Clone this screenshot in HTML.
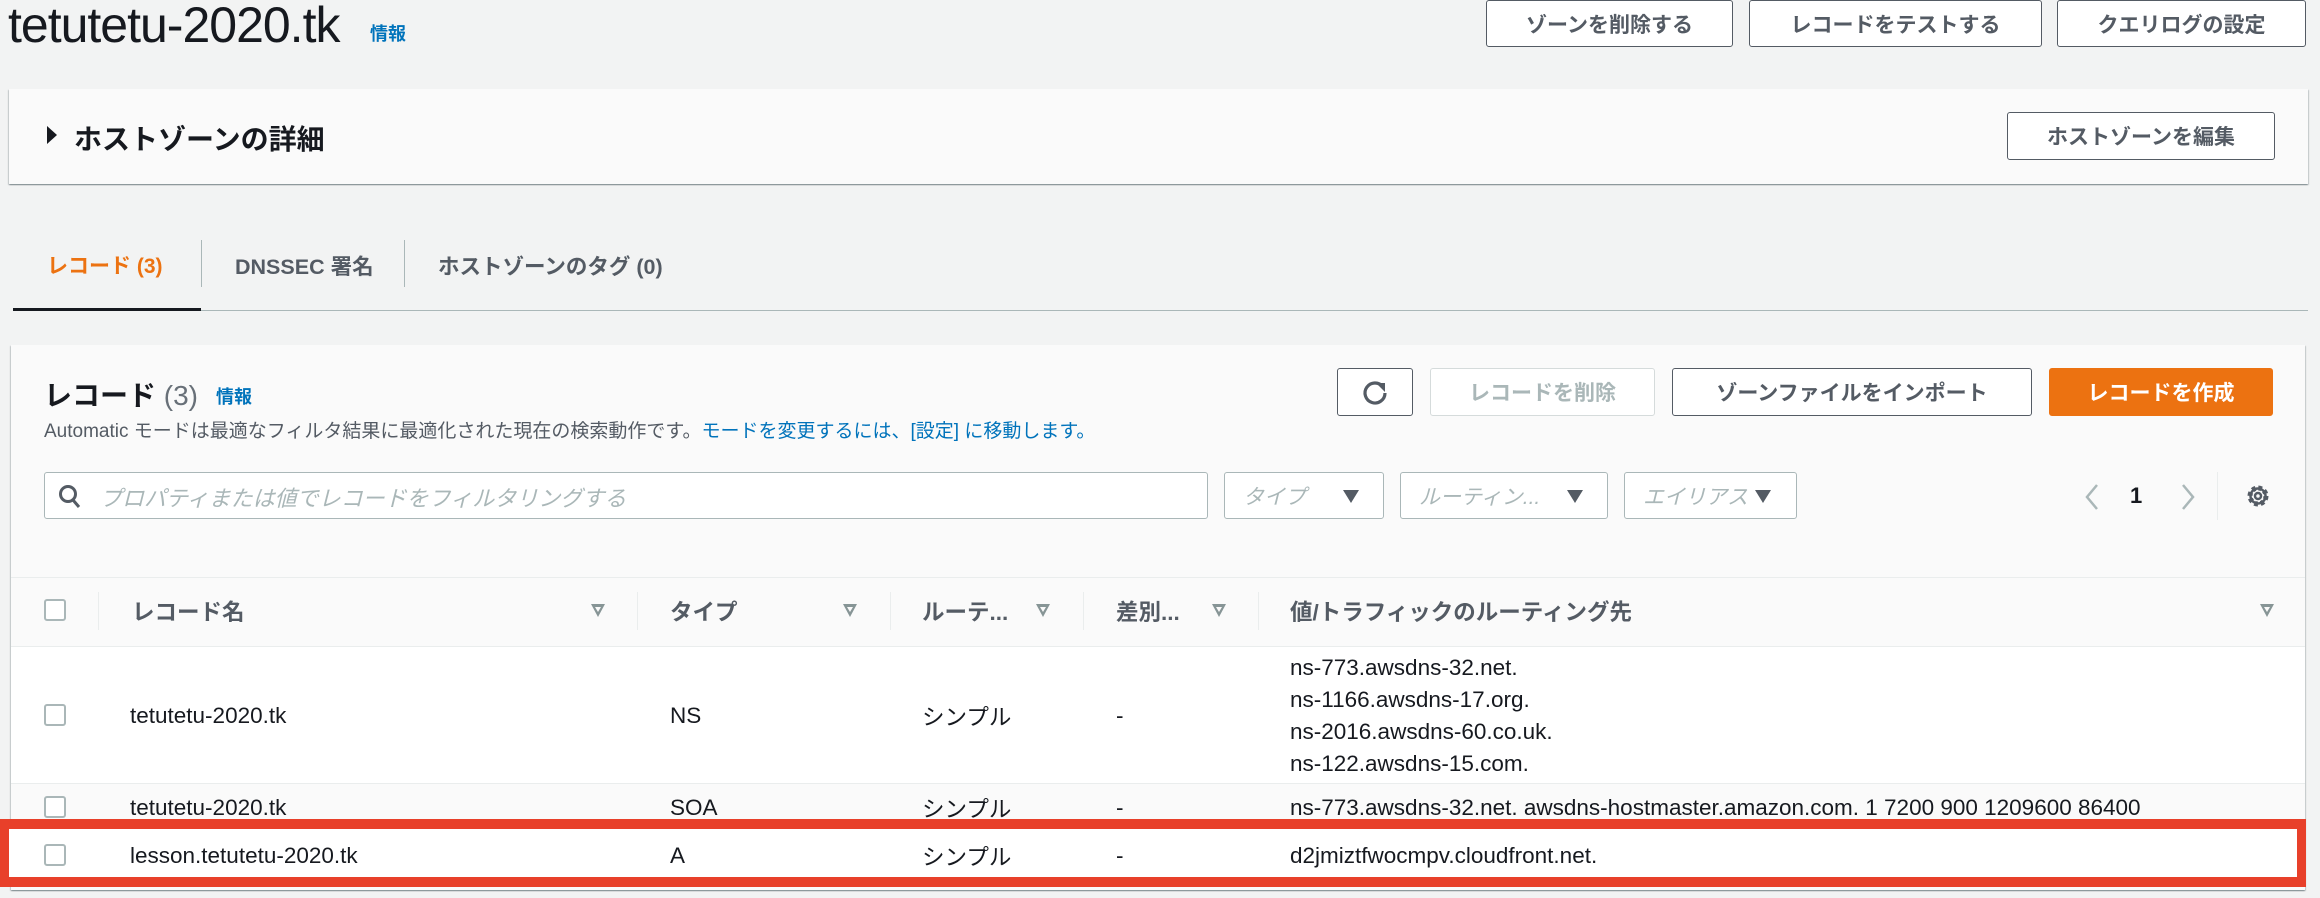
<!DOCTYPE html>
<html><head><meta charset="utf-8"><style>
*{box-sizing:border-box;margin:0;padding:0}
body{width:2320px;height:898px;background:#f2f3f3;position:relative;overflow:hidden;font-family:"Liberation Sans","Noto Sans CJK JP",sans-serif;color:#16191f}
.a{position:absolute;white-space:nowrap}
.btn{position:absolute;border:1.5px solid #545b64;border-radius:3px;background:#fff;color:#545b64;font-weight:bold;font-size:21px;display:flex;align-items:center;justify-content:center}
.link{color:#0073bb}
.cb{position:absolute;width:22px;height:22px;border:2px solid #aab7b8;border-radius:3px;background:#fff}
.th{position:absolute;top:611px;transform:translateY(-50%);font-size:22.5px;font-weight:bold;color:#545b64;white-space:nowrap}
.sort{position:absolute;top:604px;width:0;height:0;border-left:7px solid transparent;border-right:7px solid transparent;border-top:13px solid #879596}
.sort:after{content:"";position:absolute;left:-3px;top:-10px;border-left:3px solid transparent;border-right:3px solid transparent;border-top:5px solid #fafafa}
.vd{position:absolute;top:592px;width:1px;height:38px;background:#eaeded}
.td{position:absolute;font-size:22.5px;color:#16191f;white-space:nowrap;transform:translateY(-50%)}
.filt{position:absolute;top:472px;height:47px;border:1.5px solid #aab7b8;border-radius:3px;background:#fff;color:#aab7b8;font-style:italic;font-size:21px;display:flex;align-items:center;padding-left:18px}
.tri{position:absolute;top:17px;border-left:8px solid transparent;border-right:8px solid transparent;border-top:13px solid #545b64}
</style></head><body>
<div class="a" style="left:8px;top:-4px;font-size:50px;letter-spacing:-1px">tetutetu-2020.tk</div>
<div class="a link" style="left:370px;top:20px;font-size:18px;font-weight:bold">情報</div>

<div class="btn" style="left:1486px;top:0;width:247px;height:47px">ゾーンを削除する</div>
<div class="btn" style="left:1749px;top:0;width:293px;height:47px">レコードをテストする</div>
<div class="btn" style="left:2057px;top:0;width:249px;height:47px">クエリログの設定</div>

<div class="a" style="left:9px;top:89px;width:2299px;height:95px;background:#fafafa;box-shadow:0 1px 1px rgba(0,28,36,.3),1px 1px 1px rgba(0,28,36,.15),-1px 1px 1px rgba(0,28,36,.15)"></div>
<div class="a" style="left:47px;top:126px;border-top:9px solid transparent;border-bottom:9px solid transparent;border-left:10px solid #16191f"></div>
<div class="a" style="left:74px;top:118px;font-size:28px;font-weight:bold">ホストゾーンの詳細</div>
<div class="btn" style="left:2007px;top:112px;width:268px;height:48px">ホストゾーンを編集</div>

<div class="a" style="left:47px;top:250px;font-size:21px;font-weight:bold;color:#ec7211">レコード (3)</div>
<div class="a" style="left:201px;top:240px;width:1px;height:47px;background:#aab7b8"></div>
<div class="a" style="left:235px;top:250px;font-size:21.5px;font-weight:bold;color:#545b64">DNSSEC 署名</div>
<div class="a" style="left:404px;top:240px;width:1px;height:47px;background:#aab7b8"></div>
<div class="a" style="left:438px;top:250px;font-size:21.5px;font-weight:bold;color:#545b64">ホストゾーンのタグ (0)</div>
<div class="a" style="left:13px;top:310px;width:2295px;height:1px;background:#aab7b8"></div>
<div class="a" style="left:13px;top:308px;width:188px;height:3px;background:#16191f"></div>

<div class="a" style="left:11px;top:345px;width:2294px;height:545px;background:#fafafa;box-shadow:0 1px 1px rgba(0,28,36,.3),1px 1px 1px rgba(0,28,36,.15),-1px 1px 1px rgba(0,28,36,.15)"></div>
<div class="a" style="left:44px;top:374px;font-size:28px;font-weight:bold">レコード <span style="font-weight:normal;color:#687078">(3)</span></div>
<div class="a link" style="left:216px;top:383px;font-size:18px;font-weight:bold">情報</div>
<div class="a" style="left:44px;top:416px;font-size:19px;color:#545b64">Automatic モードは最適なフィルタ結果に最適化された現在の検索動作です。<span class="link">モードを変更するには、[設定] に移動します。</span></div>

<div class="btn" style="left:1337px;top:368px;width:76px;height:48px"><svg width="28" height="28" viewBox="0 0 28 28"><path d="M22 9A10 10 0 1 0 24 15" fill="none" stroke="#545b64" stroke-width="3.2"/><path d="M15 5H24V14Z" fill="#545b64"/></svg></div>
<div class="btn" style="left:1430px;top:368px;width:225px;height:48px;border-color:#d5dbdb;color:#aab7b8">レコードを削除</div>
<div class="btn" style="left:1672px;top:368px;width:360px;height:48px">ゾーンファイルをインポート</div>
<div class="btn" style="left:2049px;top:368px;width:224px;height:48px;background:#ec7211;border-color:#ec7211;color:#fff">レコードを作成</div>

<div class="a" style="left:44px;top:472px;width:1164px;height:47px;border:1.5px solid #aab7b8;border-radius:3px;background:#fff"></div>
<svg class="a" style="left:58px;top:484px" width="24" height="26" viewBox="0 0 24 26"><circle cx="10" cy="10" r="7.5" fill="none" stroke="#545b64" stroke-width="3"/><path d="M15 16L21 23" stroke="#545b64" stroke-width="3"/></svg>
<div class="a" style="left:100px;top:481px;font-size:22px;font-style:italic;color:#aab7b8">プロパティまたは値でレコードをフィルタリングする</div>
<div class="filt" style="left:1224px;width:160px">タイプ<div class="tri" style="left:118px"></div></div>
<div class="filt" style="left:1400px;width:208px">ルーティン...<div class="tri" style="left:166px"></div></div>
<div class="filt" style="left:1624px;width:173px">エイリアス<div class="tri" style="left:130px"></div></div>
<svg class="a" style="left:2082px;top:482px" width="20" height="30" viewBox="0 0 20 30"><path d="M15 3L5 15L15 27" fill="none" stroke="#aab7b8" stroke-width="2.5"/></svg>
<div class="a" style="left:2130px;top:483px;font-size:22px;font-weight:bold">1</div>
<svg class="a" style="left:2178px;top:482px" width="20" height="30" viewBox="0 0 20 30"><path d="M5 3L15 15L5 27" fill="none" stroke="#aab7b8" stroke-width="2.5"/></svg>
<div class="a" style="left:2217px;top:472px;width:1px;height:48px;background:#eaeded"></div>
<svg class="a" style="left:2245px;top:483px" width="26" height="26" viewBox="0 0 26 26"><circle cx="13" cy="13" r="8" fill="none" stroke="#545b64" stroke-width="5" stroke-dasharray="3.5 2.8"/><circle cx="13" cy="13" r="7.5" fill="none" stroke="#545b64" stroke-width="2.5"/><circle cx="13" cy="13" r="3" fill="none" stroke="#545b64" stroke-width="2.5"/></svg>

<div class="a" style="left:11px;top:577px;width:2294px;height:1px;background:#eaeded"></div>
<div class="cb" style="left:44px;top:599px"></div>
<div class="vd" style="left:98px"></div>
<div class="th" style="left:132px">レコード名</div><div class="sort" style="left:591px"></div>
<div class="vd" style="left:637px"></div>
<div class="th" style="left:670px">タイプ</div><div class="sort" style="left:843px"></div>
<div class="vd" style="left:890px"></div>
<div class="th" style="left:922px">ルーテ...</div><div class="sort" style="left:1036px"></div>
<div class="vd" style="left:1083px"></div>
<div class="th" style="left:1116px">差別...</div><div class="sort" style="left:1212px"></div>
<div class="vd" style="left:1258px"></div>
<div class="th" style="left:1290px">値/トラフィックのルーティング先</div><div class="sort" style="left:2260px"></div>
<div class="a" style="left:11px;top:646px;width:2294px;height:1px;background:#eaeded"></div>

<div class="a" style="left:11px;top:647px;width:2294px;height:136px;background:#fff"></div>
<div class="a" style="left:11px;top:783px;width:2294px;height:1px;background:#eaeded"></div>
<div class="cb" style="left:44px;top:704px"></div>
<div class="td" style="left:130px;top:716px">tetutetu-2020.tk</div>
<div class="td" style="left:670px;top:716px">NS</div>
<div class="td" style="left:922px;top:716px">シンプル</div>
<div class="td" style="left:1116px;top:716px">-</div>
<div class="td" style="left:1290px;top:668px">ns-773.awsdns-32.net.</div>
<div class="td" style="left:1290px;top:700px">ns-1166.awsdns-17.org.</div>
<div class="td" style="left:1290px;top:732px">ns-2016.awsdns-60.co.uk.</div>
<div class="td" style="left:1290px;top:764px">ns-122.awsdns-15.com.</div>

<div class="cb" style="left:44px;top:796px"></div>
<div class="td" style="left:130px;top:808px">tetutetu-2020.tk</div>
<div class="td" style="left:670px;top:808px">SOA</div>
<div class="td" style="left:922px;top:808px">シンプル</div>
<div class="td" style="left:1116px;top:808px">-</div>
<div class="td" style="left:1290px;top:808px">ns-773.awsdns-32.net. awsdns-hostmaster.amazon.com. 1 7200 900 1209600 86400</div>

<div class="a" style="left:0;top:819px;width:2306px;height:68px;border:10px solid #e8402a;border-left-width:9px;border-right-width:9px;background:#fff"></div>
<div class="cb" style="left:44px;top:844px"></div>
<div class="td" style="left:130px;top:856px">lesson.tetutetu-2020.tk</div>
<div class="td" style="left:670px;top:856px">A</div>
<div class="td" style="left:922px;top:856px">シンプル</div>
<div class="td" style="left:1116px;top:856px">-</div>
<div class="td" style="left:1290px;top:856px">d2jmiztfwocmpv.cloudfront.net.</div>
</body></html>
